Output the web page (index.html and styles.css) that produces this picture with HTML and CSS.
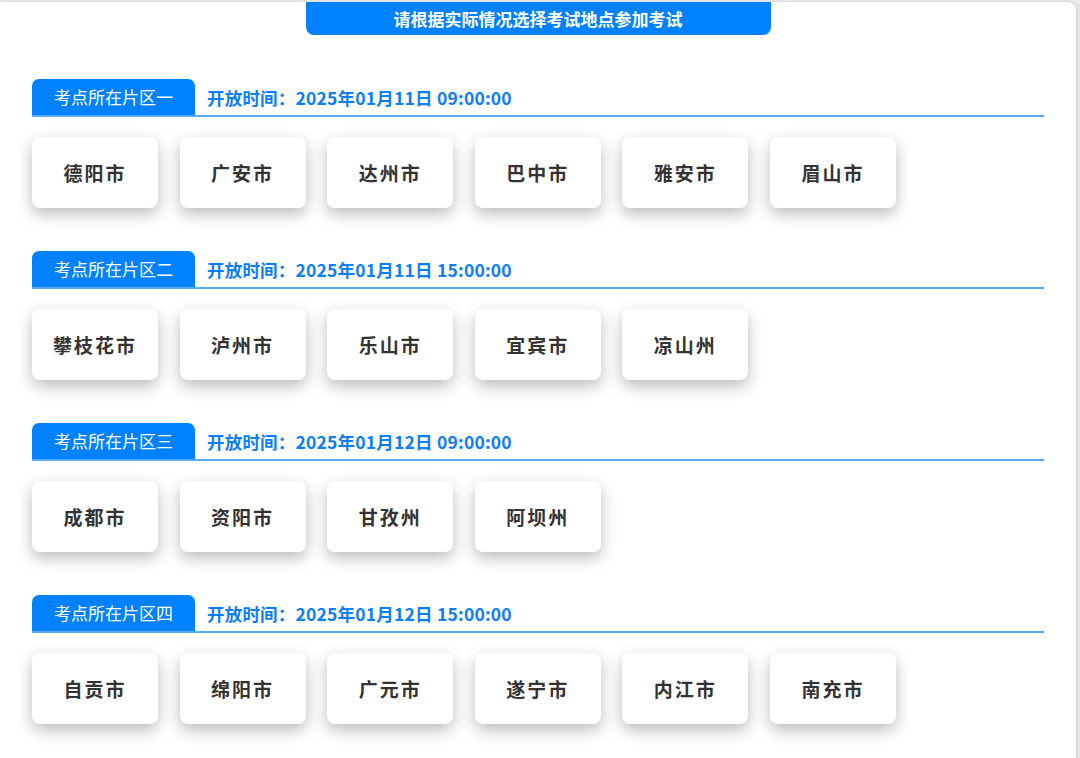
FILE: index.html
```html
<!DOCTYPE html>
<html lang="zh-CN">
<head>
  <meta charset="UTF-8">
  <title>选择考试地点</title>
  <meta name="viewport" content="width=device-width, initial-scale=1.0">
  <link rel="stylesheet" href="styles.css">
</head>
<body>
<div class="page">
  <div class="title-bar">请根据实际情况选择考试地点参加考试</div>

  <div class="zone">
    <div class="zone-head">
      <span class="zone-tab">考点所在片区一</span>
      <span class="zone-time">开放时间：2025年01月11日 09:00:00</span>
    </div>
    <div class="city-list">
      <div class="city">德阳市</div>
      <div class="city">广安市</div>
      <div class="city">达州市</div>
      <div class="city">巴中市</div>
      <div class="city">雅安市</div>
      <div class="city">眉山市</div>
    </div>
  </div>

  <div class="zone">
    <div class="zone-head">
      <span class="zone-tab">考点所在片区二</span>
      <span class="zone-time">开放时间：2025年01月11日 15:00:00</span>
    </div>
    <div class="city-list">
      <div class="city">攀枝花市</div>
      <div class="city">泸州市</div>
      <div class="city">乐山市</div>
      <div class="city">宜宾市</div>
      <div class="city">凉山州</div>
    </div>
  </div>

  <div class="zone">
    <div class="zone-head">
      <span class="zone-tab">考点所在片区三</span>
      <span class="zone-time">开放时间：2025年01月12日 09:00:00</span>
    </div>
    <div class="city-list">
      <div class="city">成都市</div>
      <div class="city">资阳市</div>
      <div class="city">甘孜州</div>
      <div class="city">阿坝州</div>
    </div>
  </div>

  <div class="zone">
    <div class="zone-head">
      <span class="zone-tab">考点所在片区四</span>
      <span class="zone-time">开放时间：2025年01月12日 15:00:00</span>
    </div>
    <div class="city-list">
      <div class="city">自贡市</div>
      <div class="city">绵阳市</div>
      <div class="city">广元市</div>
      <div class="city">遂宁市</div>
      <div class="city">内江市</div>
      <div class="city">南充市</div>
    </div>
  </div>
</div>
</body>
</html>
```

FILE: styles.css
```css
body {
  margin: 0;
  padding: 2px 4px 0 0;
  background: #e9e9e9;
  font-family: "Noto Sans CJK SC", "Noto Sans", sans-serif;
}

.page {
  background: #fff;
  border-radius: 0 8px 0 0;
  box-shadow: 1px 0 3px rgba(0,0,0,0.12);
  padding: 0 32px 40px 32px;
}

.title-bar {
  width: 465px;
  height: 33px;
  margin: 0 auto;
  background: #0081ff;
  color: #fff;
  font-size: 17px;
  font-weight: bold;
  line-height: 33px;
  text-align: center;
  border-radius: 0 0 8px 8px;
}

.zone {
  margin-top: 44px;
}

.zone + .zone {
  margin-top: 43px;
}

.zone-head {
  display: flex;
  align-items: center;
  border-bottom: 2px solid #5aaaff;
}

.zone-tab {
  width: 163px;
  height: 36px;
  line-height: 36px;
  background: #0081ff;
  color: #fff;
  font-size: 17px;
  text-align: center;
  border-radius: 7px 7px 0 0;
}

.zone-time {
  margin-left: 12px;
  color: #0a7ef5;
  font-size: 17.5px;
  font-weight: bold;
  letter-spacing: 0.2px;
}

.city-list {
  display: flex;
  gap: 21.6px;
  margin-top: 20px;
}

.city {
  width: 126px;
  height: 71px;
  display: flex;
  align-items: center;
  justify-content: center;
  background: #fff;
  border-radius: 8px;
  box-shadow: 0 6px 16px rgba(0,0,0,0.27);
  color: #333;
  font-size: 19px;
  font-weight: bold;
  letter-spacing: 2px;
}
```
